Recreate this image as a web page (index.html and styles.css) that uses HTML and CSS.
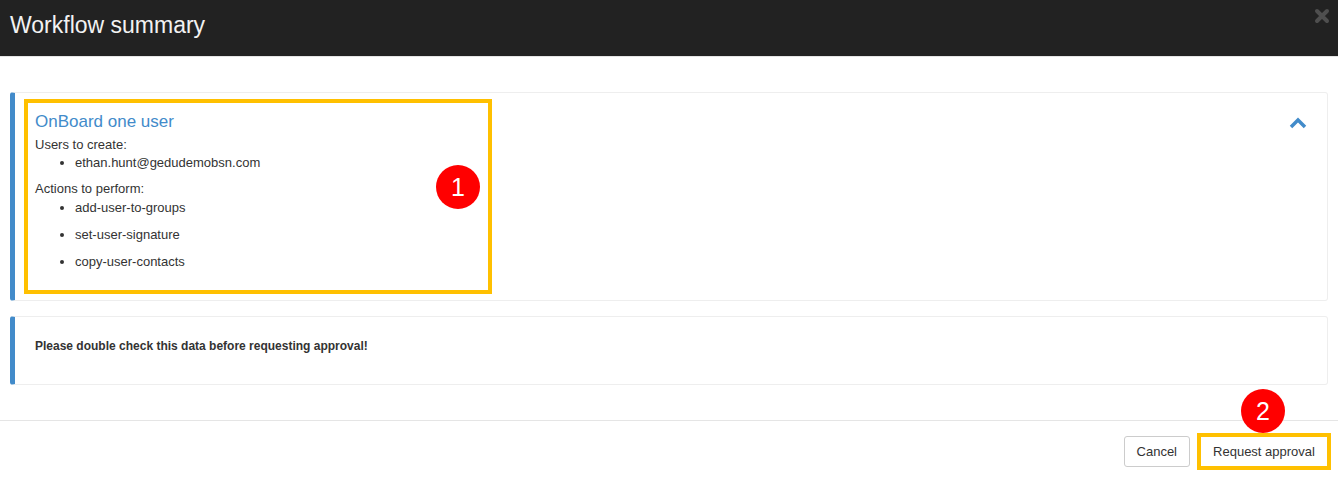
FILE: index.html
```html
<!DOCTYPE html>
<html lang="en">
<head>
    <meta charset="UTF-8">
    <title>Workflow summary</title>
    <link rel="stylesheet" href="styles.css">
</head>
<body>
    <div class="modal">
        <!-- Header -->
        <div class="modal-header">
            <h4 class="modal-title">Workflow summary</h4>
            <span class="close">
                <svg width="16" height="16" viewBox="0 0 16 16">
                    <path d="M3 3 L13 13 M13 3 L3 13" stroke="#4f4f4f" stroke-width="4" stroke-linecap="round"/>
                </svg>
            </span>
        </div>

        <!-- Body -->
        <div class="modal-body">
            <div class="panel panel-workflow">
                <div class="highlight">
                    <h3 class="workflow-title">OnBoard one user</h3>
                    <p class="label">Users to create:</p>
                    <ul class="list">
                        <li>ethan.hunt@gedudemobsn.com</li>
                    </ul>
                    <p class="label label-actions">Actions to perform:</p>
                    <ul class="list list-actions">
                        <li>add-user-to-groups</li>
                        <li>set-user-signature</li>
                        <li>copy-user-contacts</li>
                    </ul>
                    <span class="step step-one">1</span>
                </div>
                <span class="toggle">
                    <svg width="18" height="12" viewBox="0 0 18 12">
                        <polyline points="2,10 9,3 16,10" fill="none" stroke="#428bca" stroke-width="3.5"/>
                    </svg>
                </span>
            </div>

            <div class="panel panel-note">
                <p class="note">Please double check this data before requesting approval!</p>
            </div>
        </div>

        <!-- Footer -->
        <div class="modal-footer">
            <button class="btn">Cancel</button>
            <div class="highlight-btn">
                <button class="btn">Request approval</button>
                <span class="step step-two">2</span>
            </div>
        </div>
    </div>
</body>
</html>
```

FILE: styles.css
```css
body {
    margin: 0;
    font-family: "Liberation Sans", Arial, sans-serif;
    font-size: 13px;
    color: #333;
    background: #fff;
}

.modal-header {
    height: 56px;
    background-color: #222;
    display: flex;
    align-items: center;
    justify-content: space-between;
    padding: 0 8px 0 10px;
    border-bottom: 1px solid #e5e5e5;
}

.modal-title {
    margin: 0 0 6px 0;
    font-size: 23px;
    font-weight: normal;
    color: #f2f2f2;
}

.close {
    display: flex;
    align-self: flex-start;
    margin-top: 8px;
}

.modal-body {
    padding: 35px 10px 35px 10px;
}

.panel {
    position: relative;
    border: 1px solid #eee;
    border-left: 5px solid #428bca;
    border-radius: 3px;
    background: #fff;
}

.panel-workflow {
    padding: 6px 9px 6px 9px;
}

.highlight {
    position: relative;
    width: 446px;
    border: 4px solid #ffc000;
    padding: 9px 7px 20px 7px;
}

.workflow-title {
    margin: 0 0 4px 0;
    font-size: 17px;
    line-height: 20px;
    font-weight: normal;
    color: #428bca;
}

.label {
    margin: 0;
    line-height: 18px;
}

.label-actions {
    margin-top: 9px;
}

.list {
    margin: 0;
    padding-left: 40px;
    line-height: 17px;
}

.list-actions li {
    margin-top: 10px;
}

.list-actions li:first-child {
    margin-top: 1px;
}

.step {
    position: absolute;
    width: 44px;
    height: 44px;
    border-radius: 50%;
    background-color: #f00;
    color: #fff;
    font-size: 25px;
    display: flex;
    justify-content: center;
    align-items: center;
}

.step-one {
    left: 408px;
    top: 62px;
}

.toggle {
    position: absolute;
    right: 20px;
    top: 24px;
    display: flex;
}

.panel-note {
    margin-top: 15px;
    height: 67px;
    padding-left: 20px;
}

.note {
    margin: 21px 0 0 0;
    font-size: 12px;
    font-weight: bold;
    line-height: 17px;
}

.modal-footer {
    border-top: 1px solid #e5e5e5;
    padding: 12px 7px 0 0;
    display: flex;
    justify-content: flex-end;
    align-items: center;
    gap: 7px;
}

.btn {
    font-family: "Liberation Sans", Arial, sans-serif;
    font-size: 13px;
    color: #333;
    background: #fff;
    border: 1px solid #ccc;
    border-radius: 3px;
    height: 31px;
    padding: 0 12px;
}

.highlight-btn {
    position: relative;
    border: 4px solid #ffc000;
    display: flex;
}

.highlight-btn .btn {
    border-color: #fff;
    height: 29px;
    width: 126px;
    padding: 0;
}

.step-two {
    left: 40px;
    top: -48px;
}
```
